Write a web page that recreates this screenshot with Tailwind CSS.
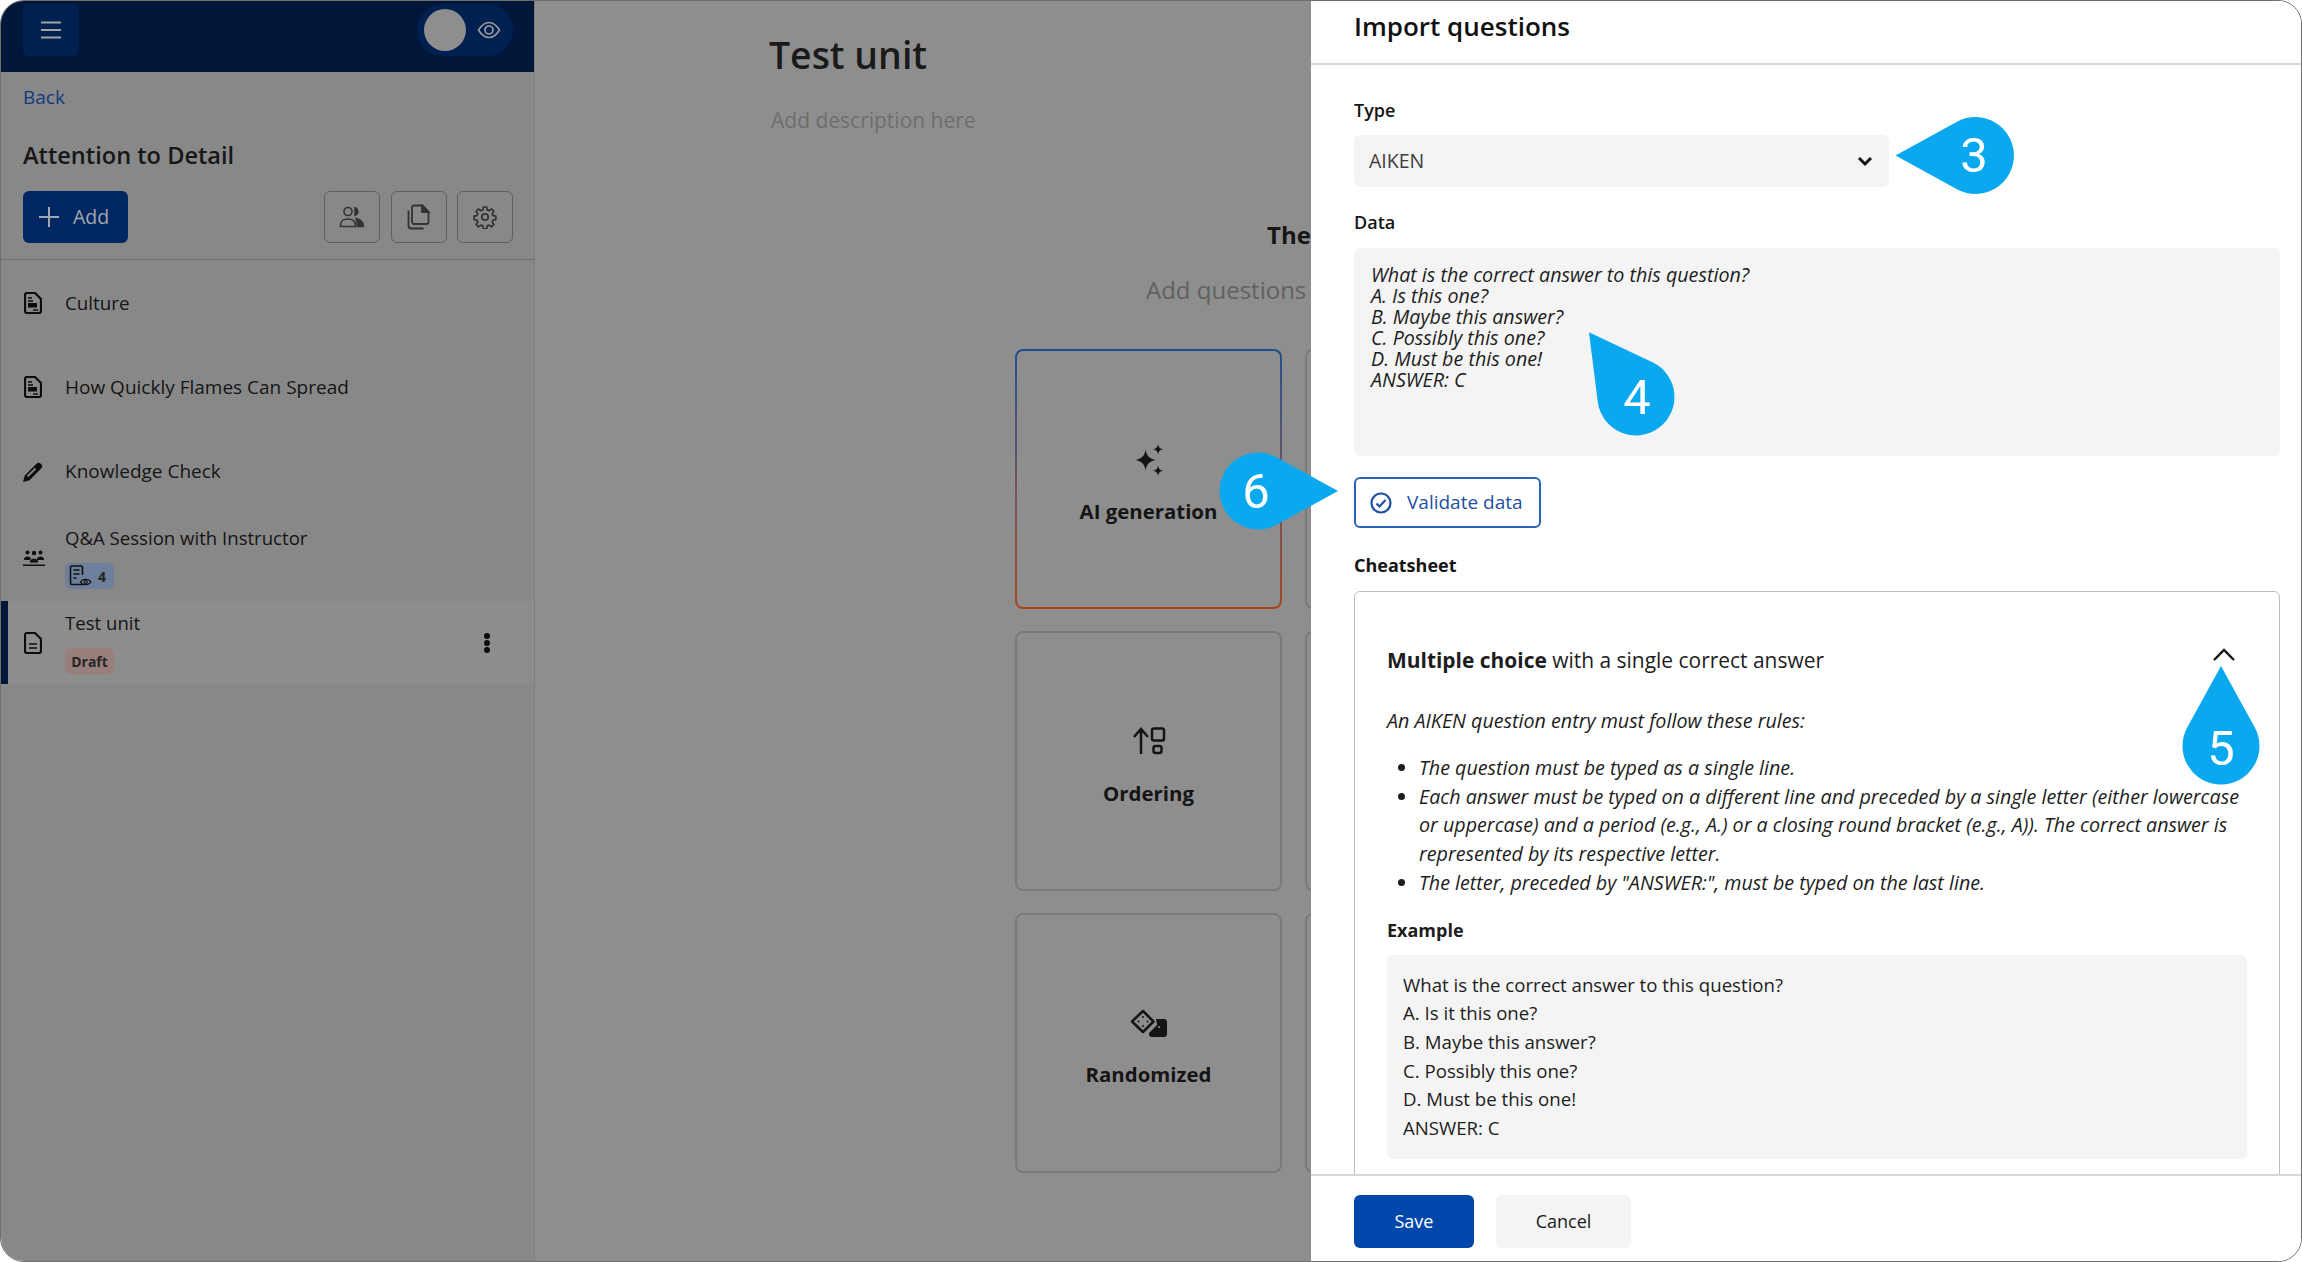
<!DOCTYPE html>
<html lang="en">
<head>
    <meta charset="UTF-8">
    <title>Import questions</title>
    <script src="https://cdn.jsdelivr.net/npm/@tailwindcss/browser@4"></script>
</head>
<body class="bg-white overflow-hidden">
<div class="relative flex w-[2302px] h-[1262px] overflow-hidden rounded-[24px] border border-[#6f6f6f] font-['Open_Sans',sans-serif] text-[#151515]">

    <!-- Sidebar -->
    <aside class="w-[534px] shrink-0 bg-[#888888] flex flex-col border-r border-[#7e7e7e]">
        <div class="h-[71px] shrink-0 bg-[#00173a] flex items-start justify-between pl-[22px] pr-[21px] pt-[3px]">
            <div class="w-[56px] h-[52px] rounded-[6px] bg-[#002052] flex items-center justify-center">
                <svg width="22" height="20" viewBox="0 0 22 20" fill="none" stroke="#a4a4a4" stroke-width="2.200"><path d="M1 2.500h20M1 10h20M1 17.500h20"/></svg>
            </div>
            <div class="w-[96px] h-[52px] rounded-full bg-[#002052] flex items-center pl-[7px] gap-[11px]">
                <div class="w-[42px] h-[42px] rounded-full bg-[#8e8e8e]"></div>
                <svg width="24" height="18" viewBox="0 0 24 18" fill="none" stroke="#9a9a9a" stroke-width="1.700"><path d="M1.500 9C5 3.500 8.500 1.500 12 1.500S19 3.500 22.500 9C19 14.500 15.500 16.500 12 16.500S5 14.500 1.500 9Z"/><circle cx="12" cy="9" r="4"/></svg>
            </div>
        </div>

        <a class="block ml-[22px] mt-[13px] h-[24px] leading-[24px] text-[19px] text-[#103a80]">Back</a>
        <h2 class="ml-[22px] mt-[30px] h-[32px] leading-[32px] text-[23.600px] font-semibold text-[#171717]">Attention to Detail</h2>

        <div class="flex items-center ml-[22px] mr-[21px] mt-[20px]">
            <button class="w-[105px] h-[52px] rounded-[6px] bg-[#002762] text-[#a2a8b2] flex items-center pl-[16px] gap-[14px] text-[19.500px]">
                <svg width="20" height="20" viewBox="0 0 20 20" stroke="#a2a8b2" stroke-width="2" fill="none"><path d="M10 0v20M0 10h20"/></svg>
                Add
            </button>
            <div class="ml-auto flex gap-[10px]">
                <button class="w-[56px] h-[52px] mr-px rounded-[6px] border border-[#5f5f5f] flex items-center justify-center">
                    <svg width="26" height="22" viewBox="0 0 26 22" fill="none" stroke="#333" stroke-width="1.600"><circle cx="9" cy="5.500" r="4"/><path d="M1.500 20.500v-1.500c0-4 3.500-6 7.500-6s7.500 2 7.500 6v1.500Z"/><path d="M16 1.700a4 4 0 0 1 0 7.600Z" fill="#333"/><path d="M17 12.500c4 .5 7 2.500 7.500 8h-6c0-3-.3-5.500-1.500-8Z" fill="#333"/></svg>
                </button>
                <button class="w-[56px] h-[52px] rounded-[6px] border border-[#5f5f5f] flex items-center justify-center">
                    <svg width="24" height="26" viewBox="0 0 24 26" fill="none" stroke="#333" stroke-width="1.800"><path d="M7 1.500h8.500l6 6V18a2 2 0 0 1-2 2H7a2 2 0 0 1-2-2V3.500a2 2 0 0 1 2-2Z"/><path d="M15 1.500v6.500h6.500Z" fill="#333"/><path d="M1.500 6.500V21.500a3 3 0 0 0 3 3h12"/></svg>
                </button>
                <button class="w-[56px] h-[52px] rounded-[6px] border border-[#5f5f5f] flex items-center justify-center">
                    <svg width="24" height="24" viewBox="0 0 24 24" fill="none" stroke="#333" stroke-width="1.700"><path d="M10.300 2h3.400l.5 2.900 1.900.8 2.400-1.700 2.400 2.400-1.700 2.400.8 1.900 2.900.5v3.400l-2.900.5-.8 1.900 1.700 2.400-2.400 2.400-2.400-1.700-1.900.8-.5 2.900h-3.400l-.5-2.900-1.900-.8-2.400 1.700-2.400-2.400 1.700-2.400-.8-1.900-2.900-.5v-3.400l2.900-.5.8-1.900L3.100 6.400l2.400-2.400 2.400 1.700 1.900-.8Z" stroke-linejoin="round"/><circle cx="12" cy="12" r="3.200"/></svg>
                </button>
            </div>
        </div>

        <div class="h-px bg-[#6c706e] mt-[16px] mb-[1px]"></div>

        <div class="h-[84px] flex items-center pl-[23px] gap-[23px] text-[18.800px]">
            <svg class="shrink-0" width="18" height="22" viewBox="0 0 18 22" fill="none" stroke="#0c0c0c" stroke-width="2.200"><path d="M3 1h8l6 6v12a2 2 0 0 1-2 2H3a2 2 0 0 1-2-2V3a2 2 0 0 1 2-2Z"/><path d="M4 6h4M4 9h5" stroke-width="1.400"/><rect x="4" y="11" width="9" height="4.500" fill="#0c0c0c" stroke="none"/><path d="M9 18h5" stroke-width="1.400"/></svg>
            <span>Culture</span>
        </div>
        <div class="h-[84px] flex items-center pl-[23px] gap-[23px] text-[19px]">
            <svg class="shrink-0" width="18" height="22" viewBox="0 0 18 22" fill="none" stroke="#0c0c0c" stroke-width="2.200"><path d="M3 1h8l6 6v12a2 2 0 0 1-2 2H3a2 2 0 0 1-2-2V3a2 2 0 0 1 2-2Z"/><path d="M4 6h4M4 9h5" stroke-width="1.400"/><rect x="4" y="11" width="9" height="4.500" fill="#0c0c0c" stroke="none"/><path d="M9 18h5" stroke-width="1.400"/></svg>
            <span>How Quickly Flames Can Spread</span>
        </div>
        <div class="h-[85px] flex items-center pl-[21px] gap-[21px] text-[19px]">
            <svg class="shrink-0" width="22" height="22" viewBox="0 0 22 22"><path d="M1 21l1.800-6.500L14.500 2.800a3 3 0 0 1 4.200 0l.5.500a3 3 0 0 1 0 4.200L7.500 19.200Z" fill="#0c0c0c"/><path d="M5.500 15.500l8-8" stroke="#888" stroke-width="1.800"/></svg>
            <span>Knowledge Check</span>
        </div>
        <div class="h-[87px] flex items-center pl-[22px] gap-[20px] text-[18.600px]">
            <svg class="shrink-0" width="22" height="16" viewBox="0 0 22 16" fill="#111"><circle cx="4.500" cy="2.500" r="2"/><circle cx="11" cy="3" r="2.200"/><circle cx="17.500" cy="2.500" r="2"/><path d="M1 9c0-3.500 7-3.500 7 0v1H1Z"/><path d="M6.500 12c0-5 9-5 9 0v1h-9Z" stroke="#888" stroke-width=".8"/><path d="M14 9c0-3.500 7-3.500 7 0v1h-7Z"/><rect y="14.500" width="22" height="1.500"/></svg>
            <div class="flex flex-col items-start">
                <span class="leading-[24px]">Q&amp;A Session with Instructor</span>
                <span class="mt-[13px] w-[49px] h-[26px] rounded-[6px] bg-[#6d7f9a] flex items-center pl-[4px] gap-[5px] text-[14px] font-bold text-[#222]">
                    <svg width="24" height="22" viewBox="0 0 24 22" fill="none" stroke="#111" stroke-width="1.600"><path d="M14 19.500H3a1.500 1.500 0 0 1-1.500-1.500V2.500A1.500 1.500 0 0 1 3 1h9a1.500 1.500 0 0 1 1.500 1.500V10"/><path d="M4.500 5h6M4.500 9h6M4.500 13h3" stroke-width="1.400"/><path d="M11.500 17c2-3.500 8-3.500 10.500 0-2.500 3.500-8.500 3.500-10.500 0Z" stroke-width="1.200"/><circle cx="16.700" cy="17" r="1.500" stroke-width="1.200"/></svg>
                    4
                </span>
            </div>
        </div>
        <div class="h-[83px] flex items-center border-l-[7px] border-[#00173a] bg-[#8d8d8d] pl-[16px] pr-[43px] text-[18.600px]">
            <svg class="shrink-0" width="18" height="22" viewBox="0 0 18 22" fill="none" stroke="#0c0c0c" stroke-width="2.200"><path d="M3 1h8l6 6v12a2 2 0 0 1-2 2H3a2 2 0 0 1-2-2V3a2 2 0 0 1 2-2Z"/><path d="M5 12h8M5 16h8" stroke-width="1.600"/></svg>
            <div class="flex flex-col items-start ml-[23px]">
                <span class="leading-[24px]">Test unit</span>
                <span class="mt-[13px] w-[49px] h-[26px] rounded-[6px] bg-[#997f7c] flex items-center justify-center text-[14px] font-bold text-[#262626]">Draft</span>
            </div>
            <svg class="ml-auto" width="8" height="22" viewBox="0 0 8 22" fill="#0c0c0c"><circle cx="4" cy="4" r="3"/><circle cx="4" cy="11" r="3"/><circle cx="4" cy="18" r="3"/></svg>
        </div>
    </aside>

    <!-- Main, mostly behind the drawer -->
    <main class="w-[776px] shrink-0 bg-[#8e8e8e] overflow-hidden">
        <h1 class="ml-[234px] mt-[32px] h-[44px] leading-[44px] text-[37.400px] font-semibold text-[#1a1a1a]">Test unit</h1>
        <p class="ml-[236px] mt-[30px] h-[26px] leading-[26px] text-[21px] text-[#6e6e6e]">Add description here</p>
        <p class="ml-[732px] mt-[87px] h-[30px] leading-[30px] text-[24px] font-bold text-[#161616]">The</p>
        <p class="ml-[611px] mt-[26px] h-[28px] leading-[28px] text-[24px] text-[#616161] whitespace-nowrap">Add questions</p>

        <div class="ml-[480px] mt-[45px] grid grid-cols-[267px_267px] gap-x-[23px] gap-y-[22px] text-[20.400px] font-bold">
            <div class="h-[260px] rounded-[8px] p-[2px] bg-gradient-to-b from-[#1d4e8f] to-[#a5461a]">
                <div class="h-full rounded-[6px] bg-[#8e8e8e] flex flex-col items-center pt-[93px]">
                    <svg width="34" height="32" viewBox="0 0 30 28" fill="#141414"><path d="M12 5c1 5.500 3.500 8 9 9-5.500 1-8 3.500-9 9-1-5.500-3.500-8-9-9 5.500-1 8-3.500 9-9Z"/><path d="M23 0c.5 2.800 1.700 4 4.500 4.500C24.700 5 23.500 6.200 23 9c-.5-2.800-1.700-4-4.500-4.500C21.300 4 22.500 2.800 23 0Z"/><path d="M23 19c.5 2.800 1.700 4 4.500 4.500-2.800.5-4 1.700-4.500 4.500-.5-2.800-1.700-4-4.500-4.500 2.800-.5 4-1.700 4.500-4.500Z"/></svg>
                    <span class="mt-[21px] leading-[28px]">AI generation</span>
                </div>
            </div>
            <div class="h-[260px] rounded-[8px] border-2 border-[#7a7a7a]"></div>

            <div class="h-[260px] rounded-[8px] border-2 border-[#7a7a7a] flex flex-col items-center pt-[94px]">
                <svg width="34" height="28" viewBox="0 0 34 28" fill="none" stroke="#141414" stroke-width="2.500"><path d="M9 27V3M2 10l7-8 7 8"/><rect x="20" y="1.500" width="12" height="12" rx="2"/><rect x="21.500" y="19" width="8" height="7" rx="2"/></svg>
                <span class="mt-[24px] leading-[28px]">Ordering</span>
            </div>
            <div class="h-[260px] rounded-[8px] border-2 border-[#7a7a7a]"></div>

            <div class="h-[260px] rounded-[8px] border-2 border-[#7a7a7a] flex flex-col items-center pt-[94px]">
                <svg width="38" height="28" viewBox="0 0 38 28"><path d="M13 2l10.500 10.500L13 23 2 12.500Z" fill="none" stroke="#141414" stroke-width="2.500" stroke-linejoin="round"/><g fill="#141414"><circle cx="13" cy="8" r="1"/><circle cx="8.500" cy="12.500" r="1"/><circle cx="17.500" cy="12.500" r="1"/><circle cx="13" cy="17" r="1"/></g><path d="M26 10h8a3 3 0 0 1 3 3v12a3 3 0 0 1-3 3H22a3 3 0 0 1-3-3v-1l8-8Z" fill="#141414"/><circle cx="29" cy="18" r="1" fill="#999"/></svg>
                <span class="mt-[23px] leading-[28px]">Randomized</span>
            </div>
            <div class="h-[260px] rounded-[8px] border-2 border-[#7a7a7a]"></div>
        </div>
    </main>

    <!-- Import drawer -->
    <section class="flex-1 min-w-0 bg-white flex flex-col">
        <header class="h-[64px] shrink-0 border-b-2 border-[#d5d8dc] pl-[43px] pt-[7px]">
            <h3 class="h-[36px] leading-[36px] text-[26px] font-semibold text-[#111]">Import questions</h3>
        </header>

        <div class="flex-1 min-h-0 overflow-hidden pl-[43px] pr-[21px] pt-[33px]">
            <label class="block h-[24px] leading-[24px] text-[18px] font-semibold">Type</label>
            <div class="mt-[13px] w-[535px] h-[52px] rounded-[6px] bg-[#f4f4f4] flex items-center justify-between pl-[15px] pr-[16px] text-[19.500px] text-[#3d3d3d]">
                AIKEN
                <svg width="16" height="11" viewBox="0 0 16 11" fill="none" stroke="#151515" stroke-width="3"><path d="M2 2l6 6 6-6"/></svg>
            </div>

            <label class="block mt-[23px] h-[24px] leading-[24px] text-[18px] font-semibold">Data</label>
            <div class="mt-[14px] h-[208px] rounded-[6px] bg-[#f4f4f4] pl-[17px] pt-[16px] text-[19.700px] leading-[21px] italic text-[#1d1d1d]">
                What is the correct answer to this question?<br>A. Is this one?<br>B. Maybe this answer?<br>C. Possibly this one?<br>D. Must be this one!<br>ANSWER: C
            </div>

            <button class="mt-[21px] w-[187px] h-[51px] rounded-[6px] border-2 border-[#2b62b8] flex items-center pl-[14px] gap-[15px] text-[19px] text-[#1d4fa5]">
                <svg width="22" height="22" viewBox="0 0 22 22" fill="none" stroke="#1d4fa5" stroke-width="2.200"><circle cx="11" cy="11" r="9.500"/><path d="M6.500 11.500l3 3 6-6.500"/></svg>
                Validate data
            </button>

            <label class="block mt-[25px] h-[24px] leading-[24px] text-[18px] font-bold">Cheatsheet</label>

            <div class="mt-[14px] rounded-t-[6px] border border-[#bdbdbd] px-[32px] pt-[54px] text-[#1d1d1d]">
                <div class="flex justify-between items-start">
                    <p class="leading-[28px] text-[20.950px]"><b class="font-bold">Multiple choice</b> with a single correct answer</p>
                    <svg class="mr-[11px] mt-[2px]" width="24" height="14" viewBox="0 0 24 14" fill="none" stroke="#111" stroke-width="2.400"><path d="M2 12L12 2l10 10"/></svg>
                </div>
                <p class="mt-[33px] leading-[28px] italic text-[19.700px]">An AIKEN question entry must follow these rules:</p>
                <ul class="mt-[19px] ml-[32px] list-disc italic text-[19.700px] leading-[28.700px] whitespace-nowrap">
                    <li>The question must be typed as a single line.</li>
                    <li>Each answer must be typed on a different line and preceded by a single letter (either lowercase<br>or uppercase) and a period (e.g., A.) or a closing round bracket (e.g., A)). The correct answer is<br>represented by its respective letter.</li>
                    <li>The letter, preceded by "ANSWER:", must be typed on the last line.</li>
                </ul>
                <p class="mt-[20px] h-[24px] leading-[24px] text-[18px] font-bold">Example</p>
                <div class="mt-[13px] rounded-[6px] bg-[#f4f4f4] pl-[16px] pt-[16px] pb-[16px] text-[18.650px] leading-[28.700px]">
                    What is the correct answer to this question?<br>A. Is it this one?<br>B. Maybe this answer?<br>C. Possibly this one?<br>D. Must be this one!<br>ANSWER: C
                </div>
                <div class="h-[40px]"></div>
            </div>
        </div>

        <footer class="h-[87px] shrink-0 border-t-2 border-[#d5d8dc] flex items-start pl-[43px] pt-[19px] gap-[22px] text-[18px] font-medium">
            <button class="w-[120px] h-[53px] rounded-[6px] bg-[#0047ab] text-white">Save</button>
            <button class="w-[135px] h-[53px] rounded-[6px] bg-[#f4f4f4] text-[#1a1a1a]">Cancel</button>
        </footer>
    </section>

    <!-- Numbered callouts over the screenshot -->
    <svg class="absolute -left-px -top-px pointer-events-none" width="2302" height="1262" viewBox="0 0 2302 1262">
        <g fill="#0aa8ee">
            <path transform="translate(1975.500 155.500) rotate(-90)" d="M0-80L33.800-18.500A38.500 38.500 0 1 1-33.800-18.500Z"/>
            <path transform="translate(1636 397) rotate(-36)" d="M0-80L33.800-18.500A38.500 38.500 0 1 1-33.800-18.500Z"/>
            <path transform="translate(2221 746)" d="M0-80L33.800-18.500A38.500 38.500 0 1 1-33.800-18.500Z"/>
            <path transform="translate(1258 491) rotate(90)" d="M0-80L33.800-18.500A38.500 38.500 0 1 1-33.800-18.500Z"/>
        </g>
        <g fill="#ffffff" font-family="Roboto, sans-serif" font-size="49" text-anchor="middle">
            <text x="1974" y="172">3</text>
            <text x="1637" y="414">4</text>
            <text x="2221" y="765">5</text>
            <text x="1256" y="508">6</text>
        </g>
    </svg>
</div>
</body>
</html>
